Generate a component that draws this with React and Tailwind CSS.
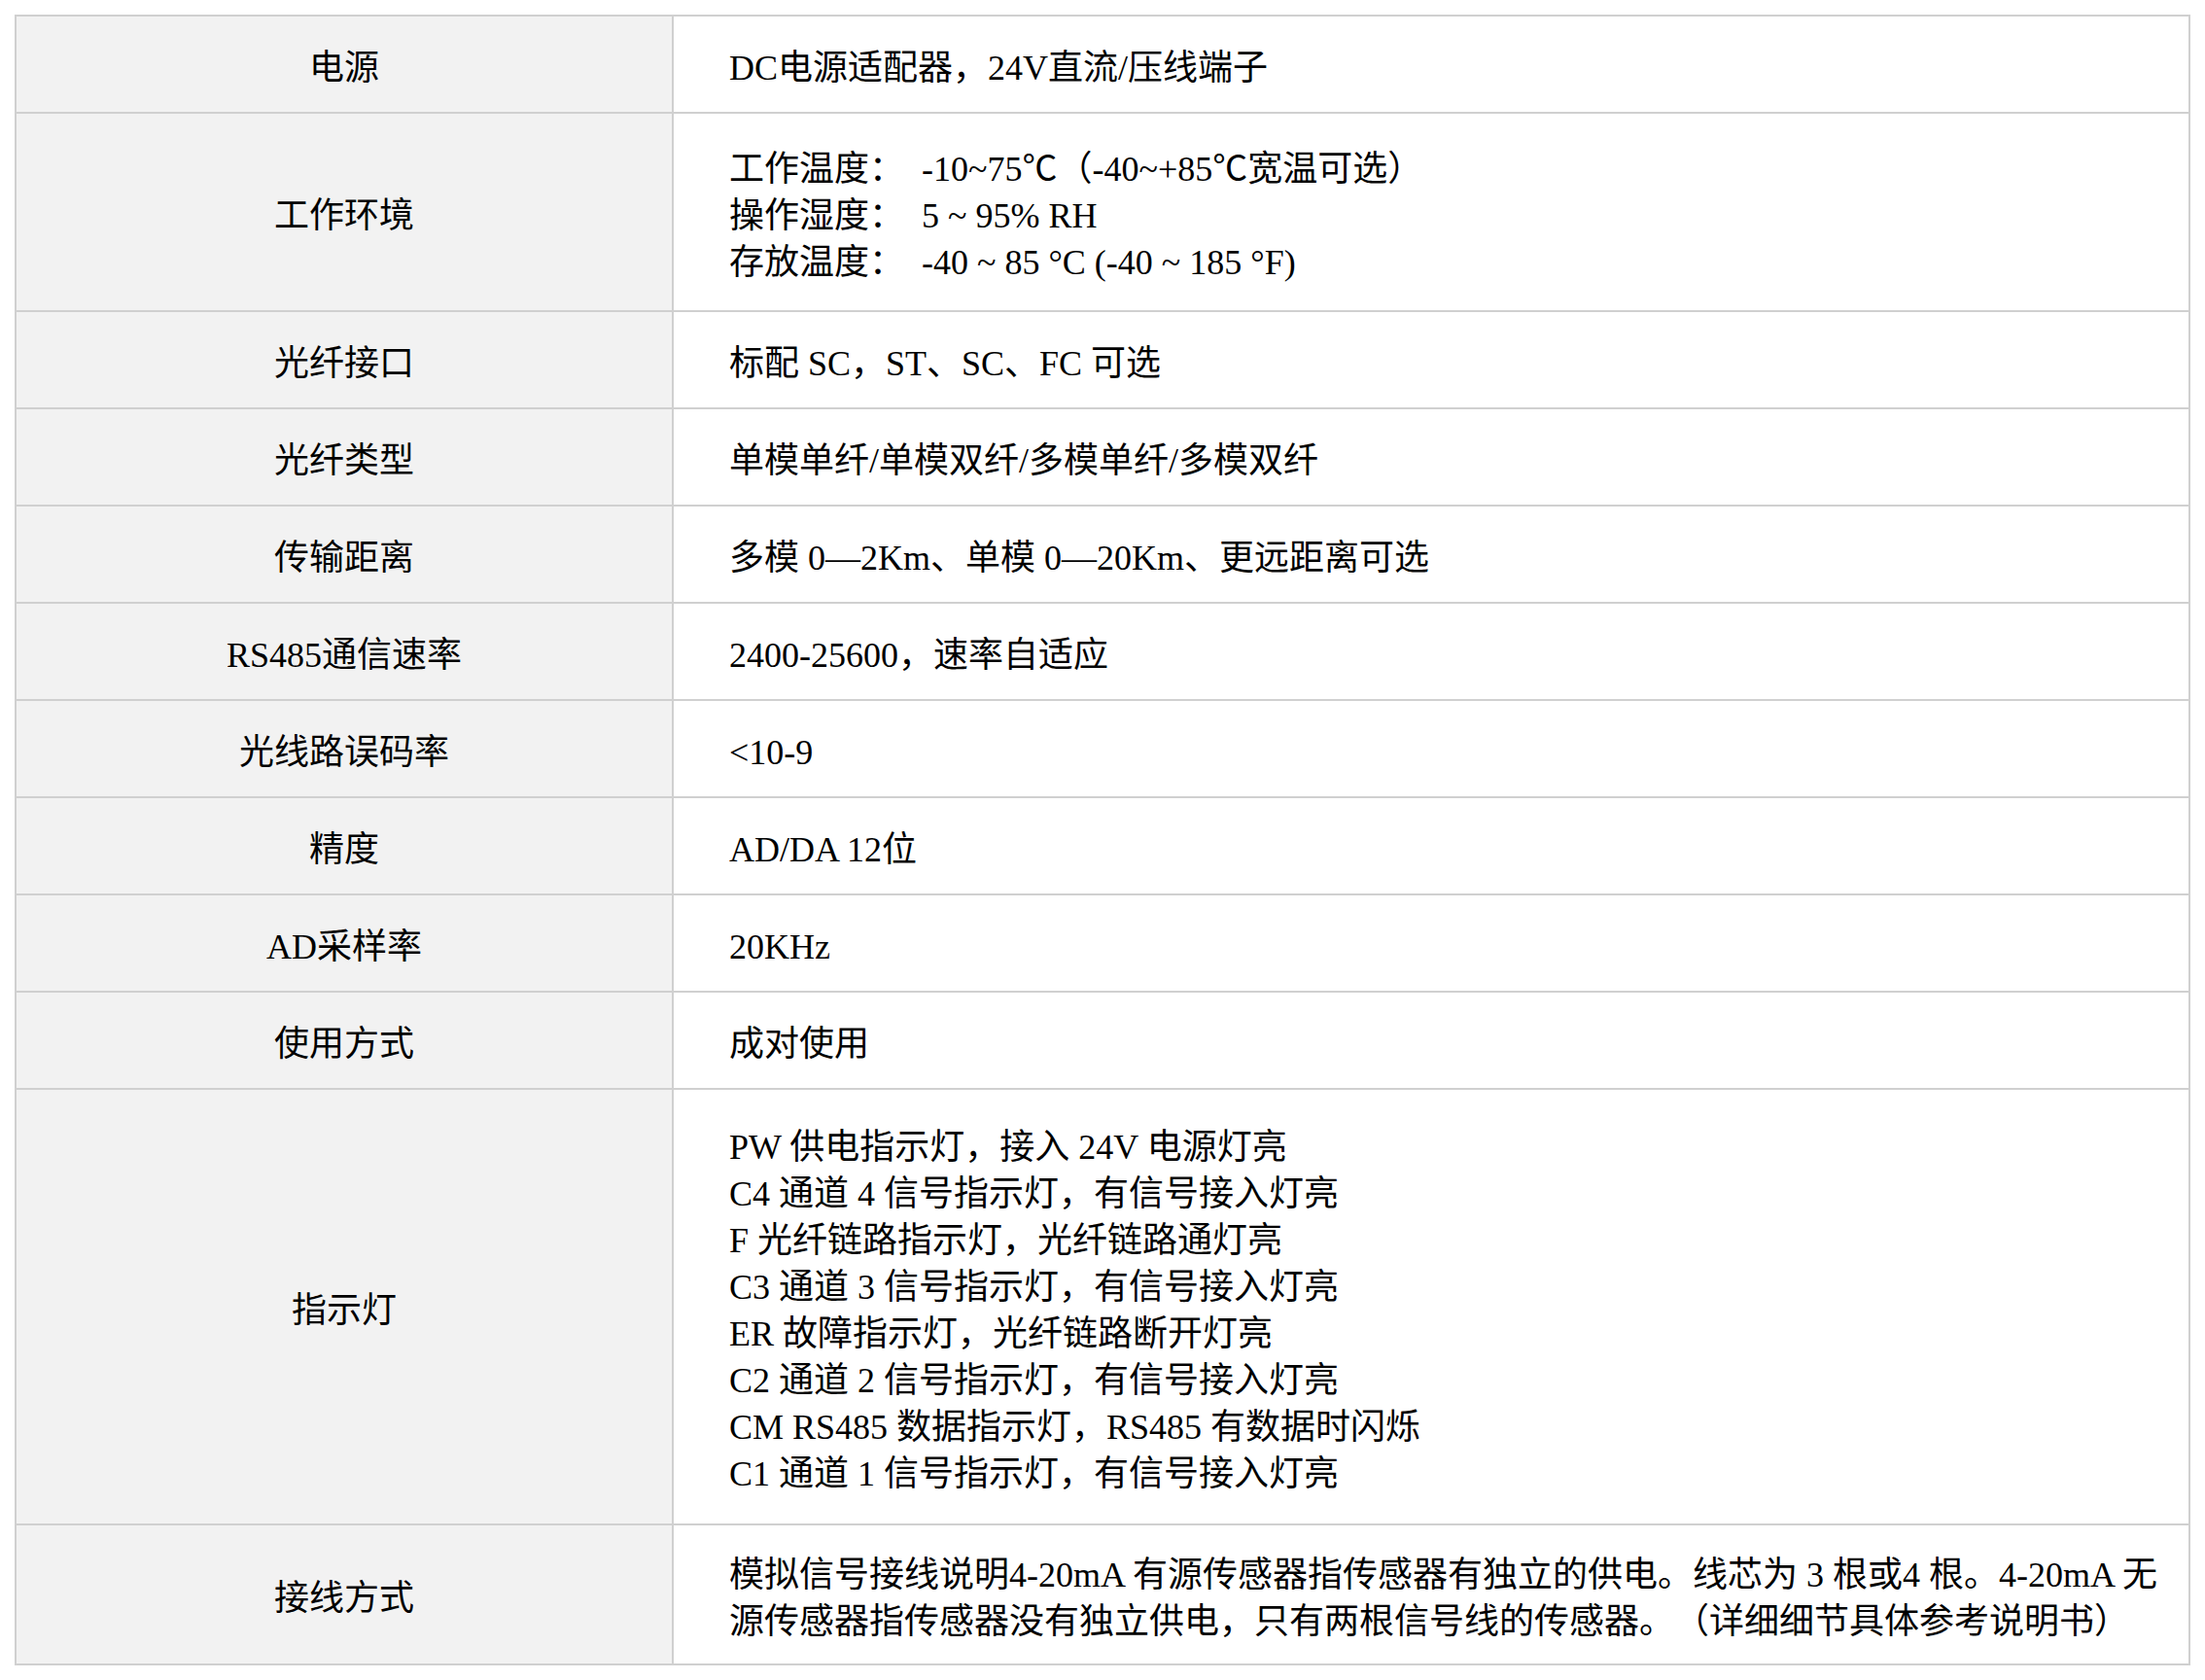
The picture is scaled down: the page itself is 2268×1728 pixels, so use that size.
const rows = [
  { label: "电源", h: "h-[98px]", lines: ["DC电源适配器，24V直流/压线端子"] },
  {
    label: "工作环境",
    h: "h-[204px]",
    lines: [
      "工作温度：  -10~75℃（-40~+85℃宽温可选）",
      "操作湿度：  5 ~ 95% RH",
      "存放温度：  -40 ~ 85 °C (-40 ~ 185 °F)",
    ],
  },
  { label: "光纤接口", h: "h-[100px]", lines: ["标配 SC，ST、SC、FC 可选"] },
  { label: "光纤类型", h: "h-[100px]", lines: ["单模单纤/单模双纤/多模单纤/多模双纤"] },
  { label: "传输距离", h: "h-[100px]", lines: ["多模 0—2Km、单模 0—20Km、更远距离可选"] },
  { label: "RS485通信速率", h: "h-[100px]", lines: ["2400-25600，速率自适应"] },
  { label: "光线路误码率", h: "h-[100px]", lines: ["<10-9"] },
  { label: "精度", h: "h-[100px]", lines: ["AD/DA 12位"] },
  { label: "AD采样率", h: "h-[100px]", lines: ["20KHz"] },
  { label: "使用方式", h: "h-[100px]", lines: ["成对使用"] },
  {
    label: "指示灯",
    h: "h-[448px]",
    lines: [
      "PW 供电指示灯，接入 24V 电源灯亮",
      "C4 通道 4 信号指示灯，有信号接入灯亮",
      "F 光纤链路指示灯，光纤链路通灯亮",
      "C3 通道 3 信号指示灯，有信号接入灯亮",
      "ER 故障指示灯，光纤链路断开灯亮",
      "C2 通道 2 信号指示灯，有信号接入灯亮",
      "CM RS485 数据指示灯，RS485 有数据时闪烁",
      "C1 通道 1 信号指示灯，有信号接入灯亮",
    ],
  },
  {
    label: "接线方式",
    h: "h-[144px]",
    lines: [
      "模拟信号接线说明4-20mA 有源传感器指传感器有独立的供电。线芯为 3 根或4 根。4-20mA 无",
      "源传感器指传感器没有独立供电，只有两根信号线的传感器。（详细细节具体参考说明书）",
    ],
  },
];

const App = () => {
  return (
    <div className="min-h-screen bg-white pt-[15px] px-[15px] font-['Liberation_Serif','Noto_Sans_CJK_SC',serif] text-[36px] leading-[48px] text-black [text-spacing-trim:space-all]">
      <div className="w-[2238px] border-2 border-[#d0d0d0]">
        {rows.map((row, i) => (
          <div
            key={i}
            className={`flex ${row.h} ${i > 0 ? "border-t-2 border-[#d0d0d0]" : ""}`}
          >
            {/* label column */}
            <div className="w-[676px] shrink-0 bg-[#f2f2f2] border-r-2 border-[#d0d0d0] flex items-center justify-center pt-[7px]">
              {row.label}
            </div>
            {/* value column */}
            <div className="flex-1 flex flex-col justify-center pl-[57px] pt-[7px] whitespace-pre">
              {row.lines.map((line, j) => (
                <div key={j}>{line}</div>
              ))}
            </div>
          </div>
        ))}
      </div>
    </div>
  );
};

export default App;
